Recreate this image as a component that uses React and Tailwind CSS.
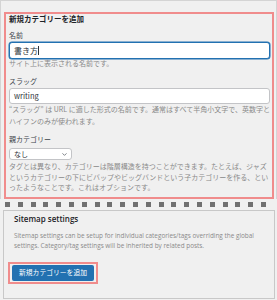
import React from 'react';
import { ChevronDown } from 'lucide-react';

const font = { fontFamily: '"Noto Sans CJK JP", "Noto Sans", sans-serif' };

export default function App() {
  const dots = Array.from({ length: 21 });

  return (
    <div className="w-[277px] h-[300px] bg-[#f0f0f0] overflow-hidden text-[#1d2327]" style={font}>
      {/* Category form */}
      <div className="border border-b-0 border-[#d4d4d4] pl-[3px] pr-[2px] pt-[11px]">
        <div className="border-2 border-[#f08c8c] pl-[3px] pr-[2px] pb-[4px]">
          <div className="text-[7.5px] leading-[9px] font-bold">新規カテゴリーを追加</div>

          <div className="mt-[8px] text-[7px] leading-[9px] text-[#3c434a]">名前</div>
          <div className="mt-[2px] h-[17px] bg-white border border-[#2271b1] rounded-[3px] shadow-[0_0_0_0.5px_#2271b1] flex items-center px-[4px]">
            <span className="text-[8px] leading-none text-[#2c3338]">書き方</span>
            <span className="w-px h-[9px] bg-[#2c3338]" />
          </div>
          <p className="text-[7px] leading-[9px] text-[#8a8a8a]">サイト上に表示される名前です。</p>

          <div className="mt-[9px] text-[7px] leading-[9px] text-[#3c434a]">スラッグ</div>
          <div className="mt-[2px] h-[16px] bg-white border border-[#c3c4c7] rounded-[3px] flex items-center px-[4px]">
            <span className="text-[7.5px] leading-none text-[#2c3338]">writing</span>
          </div>
          <p className="text-[7px] leading-[11.5px] text-[#8a8a8a]">
            “スラッグ” は URL に適した形式の名前です。通常はすべて半角小文字で、英数字とハイフンのみが使われます。
          </p>

          <div className="mt-[8px] text-[7px] leading-[9px] text-[#3c434a]">親カテゴリー</div>
          <div className="mt-[4px] w-[63px] h-[12px] bg-white border border-[#c3c4c7] rounded-[3px] flex items-center justify-between pl-[4px] pr-[3px]">
            <span className="text-[7px] leading-none text-[#2c3338]">なし</span>
            <ChevronDown className="w-[7px] h-[7px] text-[#50575e]" strokeWidth={2.5} />
          </div>
          <p className="mt-[1px] text-[7px] leading-[10.5px] text-[#8a8a8a]">
            タグとは異なり、カテゴリーは階層構造を持つことができます。たとえば、ジャズというカテゴリーの下にビバップやビッグバンドという子カテゴリーを作る、といったようなことです。これはオプションです。
          </p>
        </div>
      </div>

      {/* Torn edge */}
      <div className="mt-[3px] ml-[5px] w-[261px] flex justify-between">
        {dots.map((_, i) => (
          <div key={i} className="w-[5px] h-[5px] bg-[#707070]" />
        ))}
      </div>

      {/* Sitemap settings */}
      <div className="mt-[3px] ml-[3px] w-[272px] h-[89px] border border-[#c8c8c8] px-[10px] pt-[3px]">
        <div className="text-[8px] leading-[10px] font-semibold text-[#1d2327]" style={{ fontFamily: '"Open Sans", sans-serif' }}>
          Sitemap settings
        </div>
        <p className="mt-[7px] text-[6.4px] leading-[10px] text-[#8a8a8a]" style={{ fontFamily: '"Open Sans", sans-serif' }}>
          Sitemap settings can be setup for individual categories/tags overriding the global settings. Category/tag settings will be inherited by related posts.
        </p>
        <div className="mt-[11px] -ml-[6px] inline-flex border-2 border-[#f08c8c] px-[2px] py-[1px]">
          <div className="w-[82px] h-[16px] bg-[#2271b1] rounded-[2px] flex items-center justify-center text-white text-[6.8px] leading-none">
            新規カテゴリーを追加
          </div>
        </div>
      </div>
    </div>
  );
}
